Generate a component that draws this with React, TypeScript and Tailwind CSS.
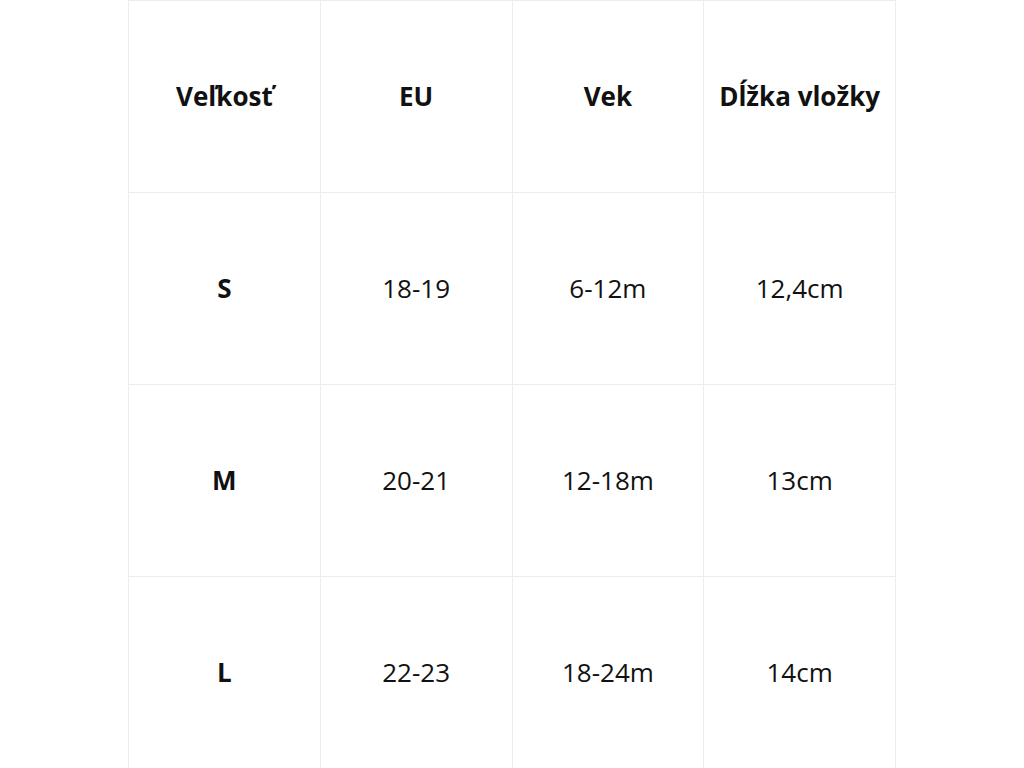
const rows = [
  ["Veľkosť", "EU", "Vek", "Dĺžka vložky"],
  ["S", "18-19", "6-12m", "12,4cm"],
  ["M", "20-21", "12-18m", "13cm"],
  ["L", "22-23", "18-24m", "14cm"],
];

export default function App() {
  return (
    <div className="w-[1024px] h-[768px] bg-white font-['Open_Sans',sans-serif] text-[#111]">
      <div className="mx-auto w-[768px] grid grid-cols-4 border-l border-t border-[#ececec]">
        {rows.map((row, r) =>
          row.map((cell, c) => (
            <div
              key={`${r}-${c}`}
              className={`h-[192px] flex items-center justify-center border-r border-b border-[#ececec] text-[26px] ${
                r === 0 || c === 0 ? "font-bold" : "font-normal"
              }`}
            >
              {cell}
            </div>
          ))
        )}
      </div>
    </div>
  );
}
